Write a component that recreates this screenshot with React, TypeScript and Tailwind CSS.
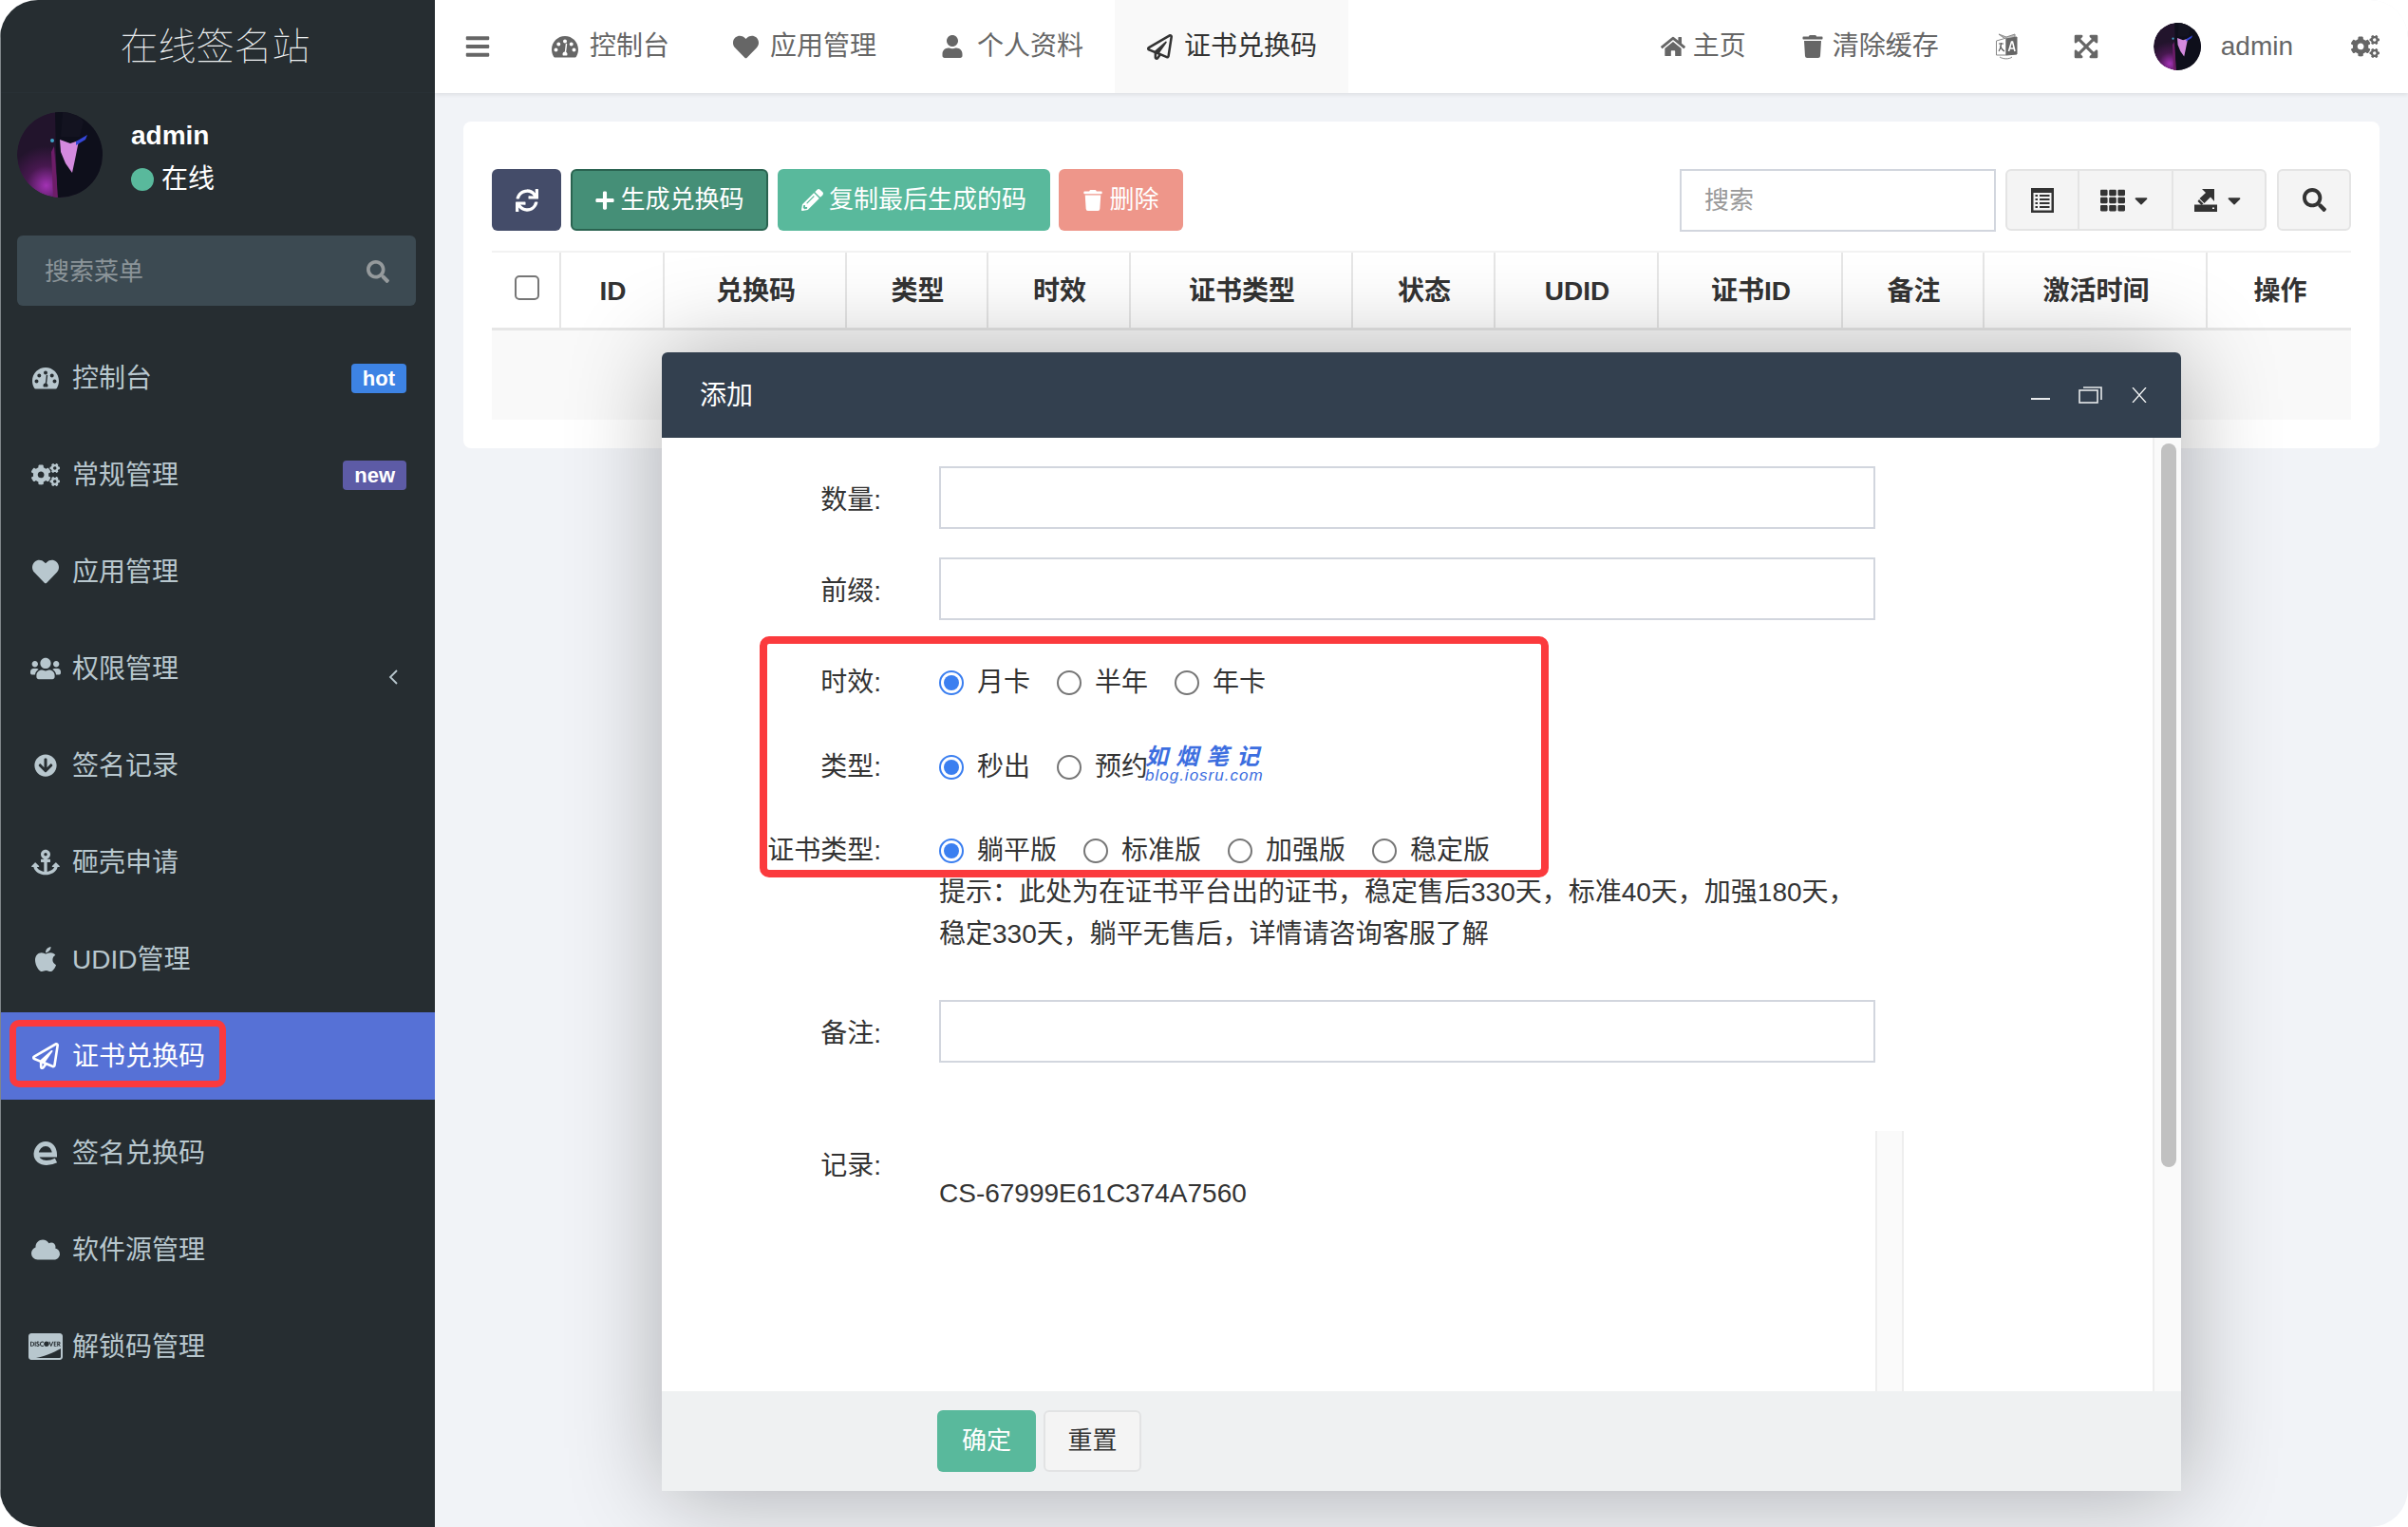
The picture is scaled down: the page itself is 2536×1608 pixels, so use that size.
import React from 'react';
import {
  FaBars, FaHeart, FaUser, FaRegPaperPlane, FaHome, FaTrash, FaExpandArrowsAlt, FaCogs, FaSearch,
  FaUsers, FaArrowCircleDown, FaAnchor, FaApple, FaCloud, FaCcDiscover,
  FaSync, FaPlus, FaPencilAlt, FaTh, FaCaretDown,
} from 'react-icons/fa';

const Gauge = ({ className }: { className?: string }) => (
  <svg viewBox="0 0 28 24" className={className} fill="currentColor">
    <path
      fillRule="evenodd"
      d="M14 1C6.3 1 0 7.3 0 15c0 2.800.7 5.300 2 7.600.3.500.8.900 1.400.900h21.200c.6 0 1.100-.4 1.400-.9 1.300-2.300 2-4.800 2-7.600C28 7.300 21.700 1 14 1zM14 4.500a2 2 0 1 1 0 4 2 2 0 0 1 0-4zM7.300 7.400a2 2 0 1 1 0 4 2 2 0 0 1 0-4zM20.700 7.400a2 2 0 1 1 0 4 2 2 0 0 1 0-4zM4.500 13.600a2 2 0 1 1 0 4 2 2 0 0 1 0-4zM23.500 13.600a2 2 0 1 1 0 4 2 2 0 0 1 0-4zM16.200 9.500l-1 8.200c.8.500 1.300 1.300 1.300 2.300 0 .5-.1 1-.4 1.400h-4.200c-.3-.4-.4-.9-.4-1.400 0-1.300 1-2.400 2.300-2.500l1-8.500c.1-.6 1.500-.5 1.400.500z"
    />
  </svg>
);

const Avatar = ({ id, className }: { id: string; className?: string }) => (
  <svg viewBox="0 0 90 90" className={className}>
    <defs>
      <radialGradient id={id} cx="34%" cy="86%" r="46%">
        <stop offset="0%" stopColor="#a232b4" />
        <stop offset="50%" stopColor="#47184f" />
        <stop offset="100%" stopColor="#22142c" />
      </radialGradient>
    </defs>
    <circle cx="45" cy="45" r="45" fill={`url(#${id})`} />
    <path d="M40 0H90V90H42Z" fill="#0e0f1b" />
    <path d="M45 29L56 33L65 30L61 50L58 64L51 54L46 42Z" fill="#d48ade" />
    <path d="M48 0L46 26L66 26L70 10L62 0Z" fill="#131320" />
    <path d="M62 31L74 24L72 29L62 35Z" fill="#3546d8" />
    <circle cx="37" cy="30" r="2" fill="#3fa3c8" />
    <path d="M39 36L43 90H38L36 42Z" fill="#6d1d68" />
  </svg>
);

const Translate = ({ className }: { className?: string }) => (
  <svg viewBox="0 0 24 28" className={className} fill="none" stroke="#888" strokeWidth="1">
    <path d="M4 1L12 4L21 1V5L12 7Z" fill="#bbb" />
    <path d="M1.500 8L12 5V23L1.500 23Z" fill="#fff" />
    <path d="M12 6L23 4V22L12 23Z" fill="#666" stroke="#666" />
    <path d="M14.500 19L17.500 9H18.500L21 19M15.500 16H20" stroke="#fff" strokeWidth="1.600" />
    <path d="M4 11H9M6.500 10C6.500 14 5.500 17 4 19M5.500 13C6.500 16 8 18 10 19" strokeWidth="1.100" stroke="#555" />
    <path d="M5 25C9 27.500 15 27.500 18 25" />
  </svg>
);

const ExportIcon = ({ className }: { className?: string }) => (
  <svg viewBox="0 0 25 25" className={className} fill="#333">
    <path d="M8 1H21V14L17 9.500L10.500 16L5.500 11L12 5Z" />
    <path d="M0 17.500H24V25H0ZM19 20.500H21V22H19Z" fillRule="evenodd" />
    <path d="M5 12L9.500 16.500L7.500 18L3.500 14Z" />
  </svg>
);

const ListIcon = ({ className }: { className?: string }) => (
  <svg viewBox="0 0 24 26" className={className}>
    <rect width="24" height="26" fill="#333" />
    <rect x="2.500" y="5" width="19" height="18.500" fill="#f4f4f4" />
    <path d="M4.500 8H7M9 8H19.500M4.500 12H7M9 12H19.500M4.500 16H7M9 16H19.500M4.500 20H7M9 20H19.500" stroke="#333" strokeWidth="1.800" />
  </svg>
);

const EdgeIcon = ({ className }: { className?: string }) => (
  <svg viewBox="0 0 26 26" className={className} fill="none" stroke="currentColor" strokeWidth="5">
    <path d="M4 15H22.500C22.500 8 18.500 3.500 13 3.500C8 3.500 3.500 8 3 14C3 20 8 23.500 14 23.500C18 23.500 21 22.500 24 21" />
  </svg>
);

const ChevronIcon = ({ className }: { className?: string }) => (
  <svg viewBox="0 0 10 16" className={className} fill="none" stroke="currentColor" strokeWidth="1.800">
    <path d="M9 1L2 8L9 15" />
  </svg>
);

const MENU = [
  { icon: <Gauge className="h-[24px] w-[28px]" />, label: '控制台', badge: 'hot' },
  { icon: <FaCogs className="text-[30px]" />, label: '常规管理', badge: 'new' },
  { icon: <FaHeart className="text-[28px]" />, label: '应用管理' },
  { icon: <FaUsers className="text-[32px]" />, label: '权限管理', arrow: true },
  { icon: <FaArrowCircleDown className="text-[24px]" />, label: '签名记录' },
  { icon: <FaAnchor className="text-[30px]" />, label: '砸壳申请' },
  { icon: <FaApple className="text-[30px]" />, label: 'UDID管理' },
  { icon: <FaRegPaperPlane className="text-[28px]" />, label: '证书兑换码', active: true },
  { icon: <EdgeIcon className="h-[26px] w-[26px]" />, label: '签名兑换码' },
  { icon: <FaCloud className="text-[30px]" />, label: '软件源管理' },
  { icon: <FaCcDiscover className="text-[36px]" />, label: '解锁码管理' },
];

const TABS = [
  { icon: <Gauge className="h-[24px] w-[28px]" />, label: '控制台' },
  { icon: <FaHeart className="text-[27px]" />, label: '应用管理' },
  { icon: <FaUser className="text-[24px]" />, label: '个人资料' },
  { icon: <FaRegPaperPlane className="text-[27px] text-[#333]" />, label: '证书兑换码', active: true },
];

const COLUMNS = ['兑换码', '类型', '时效', '证书类型', '状态', 'UDID', '证书ID', '备注', '激活时间', '操作'];

const Radio = ({ label, checked, last }: { label: string; checked?: boolean; last?: boolean }) => (
  <label className={`flex items-center gap-[14px] ${last ? '' : 'mr-[28px]'}`}>
    <span className={`flex h-[26px] w-[26px] items-center justify-center rounded-full border-2 bg-white ${checked ? 'border-[#3b7ff0]' : 'border-[#767676]'}`}>
      {checked && <span className="h-[16px] w-[16px] rounded-full bg-[#3b7ff0]" />}
    </span>
    <span className="whitespace-nowrap">{label}</span>
  </label>
);

const FormRow = ({ label, field, className, children }: { label: string; field?: boolean; className?: string; children: React.ReactNode }) => (
  <div className={`flex items-center ${className ?? ''}`}>
    <div className={`w-[231px] shrink-0 whitespace-nowrap pl-[20px] text-right ${field ? 'pt-[5px]' : ''}`}>{label}:</div>
    <div className="ml-[61px] flex items-center">{children}</div>
  </div>
);

const TextField = () => (
  <input type="text" className="h-[66px] w-[986px] border-2 border-[#d2d6de] bg-white outline-none" />
);

const App: React.FC = () => {
  return (
    <div className="h-[1608px] w-[2536px] overflow-hidden bg-white font-['Liberation_Sans','Noto_Sans_CJK_SC',sans-serif] text-[28px] text-[#333]">
      <div className="relative flex h-full w-full overflow-hidden rounded-[40px] bg-[#f1f3f7]">
        {/* Sidebar */}
        <aside className="flex h-full w-[458px] shrink-0 flex-col border-l border-[#80868a] bg-[#262d31]">
          <div className="flex h-[98px] items-center justify-center border-b border-[#283035] pr-[6px] text-[40px] font-thin text-[#eceff0]">
            在线签名站
          </div>
          <div className="flex h-[150px] gap-[30px] pl-[17px] pt-[20px]">
            <Avatar id="avatar-side" className="h-[90px] w-[90px] rounded-full" />
            <div className="flex flex-col">
              <span className="mt-[8px] text-[28px] font-bold leading-[34px] text-white">admin</span>
              <span className="mt-[9px] flex items-center gap-[8px] leading-[40px] text-white">
                <span className="h-[24px] w-[24px] rounded-full bg-[#59b99c]" />
                在线
              </span>
            </div>
          </div>
          <div className="ml-[17px] flex h-[74px] w-[420px] items-center justify-between rounded-[6px] bg-[#3c4a52] pl-[29px] pr-[28px] pt-[2px] text-[26px] text-[#8b9499]">
            搜索菜单
            <FaSearch className="text-[24px] text-[#959a9c]" />
          </div>
          <nav className="mt-[30px] flex flex-col gap-[10px]">
            {MENU.map((item) => (
              <div
                key={item.label}
                className={`relative flex h-[92px] items-center pl-[27px] pr-[30px] ${item.active ? 'bg-[#5671d6] text-white' : 'text-[#b8c7ce]'}`}
              >
                <span className="flex w-[40px] shrink-0 justify-center">{item.icon}</span>
                <span className="ml-[8px] whitespace-nowrap pt-[2px]">{item.label}</span>
                {item.badge && (
                  <span className={`ml-auto rounded-[4px] px-[12px] text-[22px] font-bold leading-[31px] text-white ${item.badge === 'hot' ? 'bg-[#3d83e4]' : 'bg-[#5d5ba6]'}`}>
                    {item.badge}
                  </span>
                )}
                {item.arrow && <ChevronIcon className="ml-auto mr-[9px] mt-[18px] h-[16px] w-[10px]" />}
                {item.active && (
                  <span className="absolute left-[9px] top-[8px] h-[71px] w-[228px] rounded-[10px] border-[7px] border-[#fb3a3d]" />
                )}
              </div>
            ))}
          </nav>
        </aside>

        {/* Main column */}
        <div className="flex min-w-0 flex-1 flex-col">
          <header className="relative z-10 flex h-[98px] shrink-0 items-center bg-white text-[#666] shadow-[0_2px_4px_rgba(0,0,0,0.08)]">
            <FaBars className="ml-[31px] mr-[31px] text-[28px]" />
            {TABS.map((tab) => (
              <div
                key={tab.label}
                className={`flex h-full items-center gap-[12px] px-[33px] ${tab.active ? 'bg-[#f9f9f9] text-[#333]' : ''}`}
              >
                <span className="flex w-[28px] justify-center">{tab.icon}</span>
                <span className="whitespace-nowrap">{tab.label}</span>
              </div>
            ))}
            <div className="ml-auto flex items-center pr-[30px]">
              <FaHome className="text-[26px]" />
              <span className="ml-[8px]">主页</span>
              <FaTrash className="ml-[58px] text-[24px]" />
              <span className="ml-[9px]">清除缓存</span>
              <Translate className="ml-[59px] h-[28px] w-[24px]" />
              <FaExpandArrowsAlt className="ml-[58px] text-[28px]" />
              <Avatar id="avatar-top" className="ml-[57px] h-[50px] w-[50px] rounded-full" />
              <span className="ml-[21px]">admin</span>
              <FaCogs className="ml-[61px] text-[30px]" />
            </div>
          </header>

          <main className="px-[30px] pt-[30px]">
            <div className="rounded-[8px] bg-white px-[30px] pb-[30px] pt-[50px]">
              <div className="flex items-stretch text-[26px] text-white">
                <button className="flex h-[65px] w-[73px] items-center justify-center rounded-[6px] bg-[#444c69]">
                  <FaSync className="text-[24px]" />
                </button>
                <button className="ml-[10px] flex h-[65px] w-[208px] items-center justify-center gap-[5px] rounded-[6px] border-2 border-[#2a6350] bg-[#458f77]">
                  <FaPlus className="text-[22px]" /> 生成兑换码
                </button>
                <button className="ml-[10px] flex h-[65px] w-[287px] items-center justify-center gap-[6px] rounded-[6px] bg-[#59b99c]">
                  <FaPencilAlt className="text-[23px]" /> 复制最后生成的码
                </button>
                <button className="ml-[9px] flex h-[65px] w-[131px] items-center justify-center gap-[6px] rounded-[6px] bg-[#ee968a]">
                  <FaTrash className="text-[22px]" /> 删除
                </button>
                <input
                  type="text"
                  placeholder="搜索"
                  className="ml-auto h-[66px] w-[333px] border-2 border-[#d2d6de] bg-white px-[24px] text-[26px] text-[#333] outline-none placeholder:text-[#999]"
                />
                <div className="ml-[10px] flex h-[65px] w-[275px] rounded-[6px] border-2 border-[#e4e4e4] bg-[#f4f4f4] text-[#333]">
                  <div className="flex w-[76px] items-center justify-center border-r-2 border-[#e4e4e4]">
                    <ListIcon className="h-[26px] w-[24px]" />
                  </div>
                  <div className="flex w-[99px] items-center justify-center gap-[6px] border-r-2 border-[#e4e4e4]">
                    <FaTh className="text-[26px]" />
                    <FaCaretDown className="text-[22px]" />
                  </div>
                  <div className="flex flex-1 items-center justify-center gap-[6px]">
                    <ExportIcon className="h-[25px] w-[25px]" />
                    <FaCaretDown className="text-[22px]" />
                  </div>
                </div>
                <button className="ml-[11px] flex h-[65px] w-[78px] items-center justify-center rounded-[6px] border-2 border-[#e4e4e4] bg-[#f4f4f4] text-[#333]">
                  <FaSearch className="text-[25px]" />
                </button>
              </div>

              <div className="mt-[20px] grid grid-cols-[73px_109px_192px_149px_150px_234px_150px_172px_194px_149px_235px_151px] border-t-2 border-[#f2f2f2]">
                <div className="flex h-[82px] items-start justify-center border-b-[3px] border-r-2 border-[#e6e6e6] pl-[2px] pt-[24px]">
                  <span className="h-[26px] w-[26px] rounded-[5px] border-2 border-[#767676] bg-white" />
                </div>
                <div className="flex h-[82px] items-center justify-center border-b-[3px] border-r-2 border-[#e6e6e6] pl-[2px] pt-[2px] font-bold">ID</div>
                {COLUMNS.map((col, i) => (
                  <div
                    key={col}
                    className={`flex h-[82px] items-center justify-center border-b-[3px] border-[#e6e6e6] pl-[2px] pt-[2px] font-bold ${i < COLUMNS.length - 1 ? 'border-r-2' : ''}`}
                  >
                    {col}
                  </div>
                ))}
                <div className="col-span-12 h-[94px] bg-[#f9f9f9]" />
              </div>
            </div>
          </main>
        </div>

        {/* Dialog */}
        <div className="absolute left-[697px] top-[371px] z-20 flex h-[1199px] w-[1600px] flex-col overflow-hidden rounded-t-[6px] bg-white shadow-[2px_2px_100px_rgba(0,0,0,0.3)]">
          <div className="flex h-[90px] shrink-0 items-center justify-between bg-[#33404f] pl-[40px] pr-[36px] text-white">
            <span className="pt-[2px]">添加</span>
            <div className="flex items-center">
              <span className="mt-[8px] h-[2px] w-[20px] bg-[#e8eaec]" />
              <svg viewBox="0 0 25 18" className="ml-[30px] h-[18px] w-[25px]" fill="none" stroke="#e8eaec" strokeWidth="1.600">
                <rect x="1" y="4" width="19" height="13" />
                <path d="M5 1H24V14" />
              </svg>
              <svg viewBox="0 0 16 16" className="ml-[31px] h-[16px] w-[16px]" fill="none" stroke="#f4f5f6" strokeWidth="1.300">
                <path d="M1 0L15 16M15 0L1 16" />
              </svg>
            </div>
          </div>

          <div className="flex min-h-0 flex-1">
            <div className="flex min-w-0 flex-1 flex-col pt-[30px]">
              <FormRow label="数量" field><TextField /></FormRow>
              <FormRow label="前缀" field className="mt-[30px]"><TextField /></FormRow>
              <FormRow label="时效" className="mt-[44px] h-[44px]">
                <Radio label="月卡" checked />
                <Radio label="半年" />
                <Radio label="年卡" last />
              </FormRow>
              <FormRow label="类型" className="mt-[45px] h-[44px]">
                <Radio label="秒出" checked />
                <Radio label="预约" last />
              </FormRow>
              <FormRow label="证书类型" className="mt-[44px] h-[44px]">
                <Radio label="躺平版" checked />
                <Radio label="标准版" />
                <Radio label="加强版" />
                <Radio label="稳定版" last />
              </FormRow>
              <p className="ml-[292px] w-[980px] text-[28px] leading-[44px]">
                提示：此处为在证书平台出的证书，稳定售后330天，标准40天，加强180天，稳定330天，躺平无售后，详情请咨询客服了解
              </p>
              <FormRow label="备注" field className="mt-[47px]"><TextField /></FormRow>
              <div className="mt-[72px] flex min-h-0 flex-1">
                <div className="w-[231px] shrink-0 pt-[15px] text-right leading-[44px]">记录:</div>
                <div className="ml-[61px] flex min-w-0 flex-1">
                  <div className="w-[986px] pt-[44px] leading-[44px]">CS-67999E61C374A7560</div>
                  <div className="w-[30px] border-x-2 border-[#eeeeee] bg-[#fafafa]" />
                </div>
              </div>
            </div>
            <div className="w-[30px] shrink-0 border-l-2 border-[#eeeeee] bg-[#fafafa] pl-[7px] pt-[6px]">
              <div className="h-[762px] w-[16px] rounded-[8px] bg-[#c1c1c1]" />
            </div>
          </div>

          <div className="flex h-[105px] shrink-0 items-start gap-[8px] bg-[#eff1f2] pl-[290px] pt-[20px] text-[26px]">
            <button className="h-[65px] w-[104px] rounded-[6px] bg-[#59b99c] text-white">确定</button>
            <button className="h-[65px] w-[103px] rounded-[6px] border-2 border-[#e2e3e4] bg-[#f4f4f4] text-[#333]">重置</button>
          </div>

          {/* annotation box and watermark laid over the form */}
          <span className="absolute left-[103px] top-[299px] h-[254px] w-[831px] rounded-[10px] border-[8px] border-[#fb3a3d]" />
          <div className="absolute left-[509px] top-[413px] flex flex-col italic text-[#3c6ee0]">
            <span className="text-[24px] font-bold leading-[25px] tracking-[8px]">如烟笔记</span>
            <span className="text-[17px] leading-[15px] tracking-[1px]">blog.iosru.com</span>
          </div>
        </div>
      </div>
    </div>
  );
};

export default App;
